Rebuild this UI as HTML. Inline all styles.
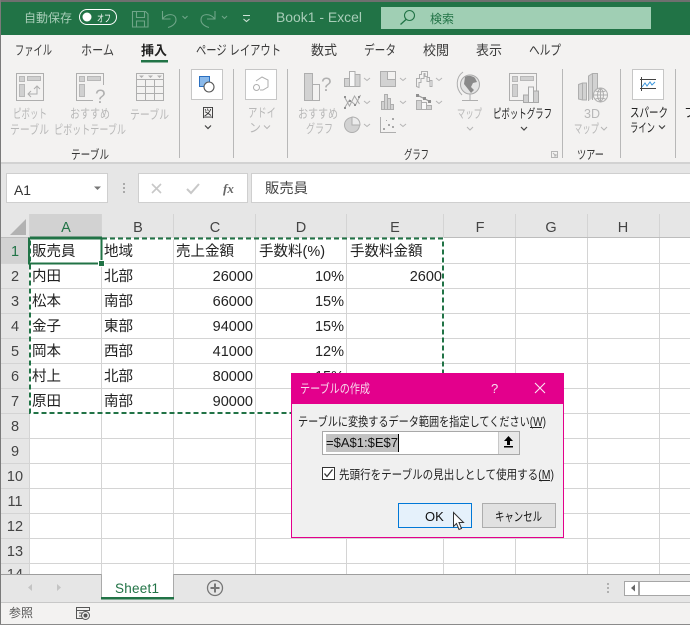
<!DOCTYPE html>
<html lang="ja"><head><meta charset="utf-8"><title>Excel</title>
<style>
html,body{margin:0;padding:0;width:690px;height:625px;overflow:hidden;background:#f3f2f1}
svg{display:block;position:absolute;left:0;top:0}
text{font-family:"Liberation Sans","Noto Sans CJK JP",sans-serif;font-size:13px}
.r{fill:#b8b8b8;font-size:12.5px}
.d{fill:#333;font-size:12.5px}
.t{fill:#3a3a3a;font-size:13.5px}
.c{fill:#222;font-size:14.5px}
.h{fill:#444;font-size:14.5px;text-anchor:middle}
.dl{fill:#222;font-size:12.5px}
.ic{fill:none;stroke:#aeaeae;stroke-width:1}
.if{fill:#d2d2d2;stroke:#aeaeae;stroke-width:1}
.iw{fill:#f8f8f8;stroke:#aeaeae;stroke-width:1}
.ch{fill:none;stroke:#b5b5b5;stroke-width:1}
.chd{fill:none;stroke:#444;stroke-width:1.2}
</style></head><body>
<svg width="690" height="625" viewBox="0 0 690 625" xmlns="http://www.w3.org/2000/svg">
<rect width="690" height="625" fill="#f3f2f1"/>
<!-- title bar -->
<rect x="0" y="2" width="690" height="33" fill="#217346"/>
<text x="24" y="22" fill="#a8cdb8" textLength="48" lengthAdjust="spacingAndGlyphs" style="font-size:12px">自動保存</text>
<rect x="79.500" y="9.500" width="37" height="15" rx="7.500" fill="#217346" stroke="#fff" stroke-width="1"/>
<circle cx="87" cy="17" r="4.500" fill="#fff"/>
<text x="97" y="22" fill="#fff" textLength="14" lengthAdjust="spacingAndGlyphs" style="font-size:10px">オフ</text>
<g fill="none" stroke="#6fa588" stroke-width="1.100">
<path d="M132.500 11.500h13l2.500 2.500v13h-15.500z"/><path d="M136.500 11.500v6h8v-6M136.500 27v-6h8v6"/>
<path d="M162.500 11v8h8M162.500 19C167 13 176 13 176 20C176 24 171 27 168 27.500"/>
<path d="M215 11v8h-8M215 19C210 13 201 13 201 20C201 24 206 27 209 27.500"/>
<path d="M182.500 16l2.500 2.500 2.500-2.500M222 16l2.500 2.500 2.500-2.500"/>
</g>
<path d="M243.500 19l3 2.500 3-2.500M243 15.500h7" fill="none" stroke="#cfe3d7" stroke-width="1.100"/>
<text x="276" y="22" fill="#a8cdb8" textLength="86" lengthAdjust="spacingAndGlyphs" style="font-size:13.500px">Book1  -  Excel</text>
<rect x="381" y="7" width="270" height="22" fill="#a0cfb4"/>
<circle cx="409.500" cy="15.500" r="5" fill="none" stroke="#217346" stroke-width="1.100"/>
<path d="M406 19.500l-5.500 5" stroke="#217346" stroke-width="1.300" fill="none"/>
<text x="430" y="23" fill="#217346" textLength="24" lengthAdjust="spacingAndGlyphs" style="font-size:12px">検索</text>

<!-- tabs -->
<text class="t" x="15" y="55" textLength="37" lengthAdjust="spacingAndGlyphs">ファイル</text>
<text class="t" x="81" y="55" textLength="33" lengthAdjust="spacingAndGlyphs">ホーム</text>
<text class="t" x="141" y="55" textLength="26" lengthAdjust="spacingAndGlyphs" style="font-weight:700;font-size:13px;fill:#222">挿入</text>
<rect x="141" y="60" width="27" height="2.500" fill="#217346"/>
<text class="t" x="196" y="55" textLength="85" lengthAdjust="spacingAndGlyphs">ページ レイアウト</text>
<text class="t" x="311" y="55" textLength="26" lengthAdjust="spacingAndGlyphs">数式</text>
<text class="t" x="364" y="55" textLength="32" lengthAdjust="spacingAndGlyphs">データ</text>
<text class="t" x="423" y="55" textLength="26" lengthAdjust="spacingAndGlyphs">校閲</text>
<text class="t" x="476" y="55" textLength="26" lengthAdjust="spacingAndGlyphs">表示</text>
<text class="t" x="529" y="55" textLength="32" lengthAdjust="spacingAndGlyphs">ヘルプ</text>

<g stroke="#b8b8b8" stroke-width="1"><path d="M179.500 69v89M233.500 69v89M287.500 69v89M562.500 69v89M620.500 69v89M675.500 69v89"/></g>

<!-- pivot table icon -->
<rect class="ic" x="16.500" y="73.500" width="27" height="27"/>
<path d="M19.500 76.500h5v5h-5zM27.500 76.500h13v4h-13zM19.500 84.500h5v12h-5z" fill="#d0d0d0" stroke="#b8b8b8"/>
<path class="ic" d="M31 91l-3 3 3 3M28 94h9v-7M34 89l3-3 3 3"/>
<!-- recommended pivot -->
<rect class="ic" x="76.500" y="73.500" width="27" height="27"/>
<path d="M79.500 76.500h5v5h-5zM87.500 76.500h13v4h-13zM79.500 84.500h5v12h-5z" fill="#d0d0d0" stroke="#b8b8b8"/>
<rect x="93" y="85" width="14" height="19" fill="#f3f2f1"/>
<text x="95" y="103" fill="#b0b0b0" style="font-size:19px">?</text>
<!-- table -->
<rect class="ic" x="136.500" y="73.500" width="27" height="27"/>
<path class="ic" d="M137 79.500h26M137 86.500h26M137 93.500h26M145.500 80v20M154.500 80v20"/>
<path d="M139 75.500h5l-2.500 2.500zM148 75.500h5l-2.500 2.500zM157 75.500h5l-2.500 2.500z" fill="#b0b0b0"/>

<text class="r" x="13" y="118" textLength="34" lengthAdjust="spacingAndGlyphs">ピボット</text>
<text class="r" x="10" y="134" textLength="39" lengthAdjust="spacingAndGlyphs">テーブル</text>
<text class="r" x="70" y="118" textLength="40" lengthAdjust="spacingAndGlyphs">おすすめ</text>
<text class="r" x="54" y="134" textLength="72" lengthAdjust="spacingAndGlyphs">ピボットテーブル</text>
<text class="r" x="130" y="119" textLength="39" lengthAdjust="spacingAndGlyphs">テーブル</text>
<text class="d" x="71" y="159" textLength="38" lengthAdjust="spacingAndGlyphs">テーブル</text>

<!-- shapes -->
<rect x="191.500" y="69.500" width="31" height="30" fill="#fff" stroke="#c6c6c6"/>
<rect x="199.500" y="76.500" width="10" height="10" fill="#8ab9ea" stroke="#2a6fc0"/>
<circle cx="209" cy="87" r="5" fill="#fff" stroke="#555" stroke-width="1.100"/>
<text class="d" x="202" y="117" textLength="12" lengthAdjust="spacingAndGlyphs">図</text>
<path class="chd" d="M205 125.500l3 3 3-3"/>
<!-- addin -->
<rect x="245.500" y="69.500" width="31" height="30" fill="#fff" stroke="#c6c6c6"/>
<circle cx="256.500" cy="87.500" r="3" class="ic"/>
<path class="ic" d="M256 81l6-4 6 3v7l-5 3h-3"/>
<text class="r" x="248" y="117" textLength="28" lengthAdjust="spacingAndGlyphs">アドイ</text>
<text class="r" x="249" y="132" textLength="12" lengthAdjust="spacingAndGlyphs">ン</text>
<path class="ch" d="M264 125.500l3 3 3-3"/>

<!-- rec chart -->
<rect class="if" x="304.500" y="73.500" width="8" height="27"/>
<rect class="ic" x="312.500" y="84.500" width="7" height="16"/>
<text x="321" y="91" fill="#b0b0b0" style="font-size:19px">?</text>
<text class="r" x="298" y="118" textLength="40" lengthAdjust="spacingAndGlyphs">おすすめ</text>
<text class="r" x="306" y="133" textLength="27" lengthAdjust="spacingAndGlyphs">グラフ</text>

<!-- small chart icons -->
<rect class="if" x="344.500" y="78.500" width="5" height="8"/><rect class="iw" x="349.500" y="71.500" width="5.500" height="15"/><rect class="if" x="355" y="74.500" width="5" height="12"/>
<rect class="if" x="380.500" y="71.500" width="15" height="15"/><rect x="387.500" y="71.500" width="8" height="8" fill="#f3f2f1" stroke="#aeaeae"/>
<path class="ic" d="M416.500 86.500v-8h3v-4h2v-3h6v6h2v3h2.500v6h-2v-5h-3v-5h-2v-3h-1v5h-3v4h-2v5z"/>
<path d="M344.500 108l5-8 6 5 5-10M344.500 97l5 9 5-10 5 8" fill="none" stroke="#a8a8a8"/>
<path d="M344 107h2v2h-2zM349 100h2v2h-2zM354 104h2v2h-2zM344 96h2v2h-2zM358 96h2v2h-2z" fill="#909090"/>
<rect class="if" x="381.500" y="101.500" width="3" height="8"/><rect class="if" x="384.500" y="94.500" width="3" height="15"/><rect class="if" x="387.500" y="98.500" width="3" height="11"/><rect class="if" x="390.500" y="104.500" width="3" height="5"/>
<rect class="if" x="416.500" y="100.500" width="5" height="9"/><rect class="iw" x="421.500" y="102.500" width="5" height="7"/><rect class="if" x="426.500" y="105.500" width="5" height="4"/>
<path d="M417 95l14 7" stroke="#999" stroke-width="1.200" fill="none"/><path d="M416 94h3v3h-3zM423 97h3v3h-3zM428 100h3v3h-3z" fill="#909090"/>
<circle cx="352" cy="125" r="7.500" fill="#d2d2d2" stroke="#aeaeae"/><path d="M352 117v8h8C360 120 357 117 352 117z" fill="#ececec" stroke="#aeaeae"/>
<path class="ic" d="M380.500 117v15.500h15.500"/><path d="M383 128h2v2h-2zM388 124h2v2h-2zM392 118h2v2h-2zM386 120h1v1h-1zM392 126h2v2h-2z" fill="#a8a8a8"/>
<path class="ch" d="M364 78l3 2.500 3-2.500M364 101l3 2.500 3-2.500M364 124l3 2.500 3-2.500M400 78l3 2.500 3-2.500M400 101l3 2.500 3-2.500M400 124l3 2.500 3-2.500M436 78l3 2.500 3-2.500M436 101l3 2.500 3-2.500"/>

<!-- map -->
<circle cx="470" cy="84.500" r="9.500" fill="#e4e4e4" stroke="#a8a8a8"/>
<path d="M465 77c3-2 8-1 10 1l2 4-4 1-2 4 3 3-3 3-3-4-4-5z" fill="#8a8a8a"/>
<path class="ic" d="M463 72c-7 5-8 16-1 23M462 100.500h16M470 94v6"/>
<text class="r" x="457" y="118" textLength="25" lengthAdjust="spacingAndGlyphs">マップ</text>
<path class="ch" d="M467 127l3 3 3-3"/>
<!-- pivot chart -->
<rect class="ic" x="509.500" y="73.500" width="27" height="27"/>
<path d="M512.500 76.500h5v5h-5zM520.500 76.500h13v4h-13zM512.500 84.500h5v12h-5z" fill="#d0d0d0" stroke="#b8b8b8"/>
<rect x="523.500" y="95" width="5" height="7.500" fill="#d0d0d0" stroke="#a8a8a8"/>
<rect x="528.500" y="87" width="5" height="15.500" fill="#f4f4f4" stroke="#a8a8a8"/>
<rect x="533.500" y="91" width="5" height="11.500" fill="#d0d0d0" stroke="#a8a8a8"/>
<text class="d" x="493" y="118" textLength="59" lengthAdjust="spacingAndGlyphs" style="fill:#222">ピボットグラフ</text>
<path class="chd" d="M521 127l3 3 3-3"/>
<text class="d" x="404" y="159" textLength="25" lengthAdjust="spacingAndGlyphs">グラフ</text>
<path d="M551.500 151.500h6v6h-6zM553 153l3 3M556 154v2h-2" fill="none" stroke="#b5b5b5"/>
<!-- 3D -->
<path class="if" d="M578.500 84.500l4-1.500h4v17h-4l-4-1z"/><path class="ic" d="M582.500 83v17"/>
<path class="if" d="M588.500 101v-25l4-2.500h5v21"/><path class="ic" d="M592.500 74v26"/>
<circle cx="600.500" cy="95" r="7" fill="#f3f2f1" stroke="#aeaeae"/><path class="ic" d="M593.500 95h14M600.500 88v14M595.500 91c3 1 7 1 10 0M595.500 99c3-1 7-1 10 0M600.500 88c-4 4-4 10 0 14M600.500 88c4 4 4 10 0 14"/>
<text class="r" x="584" y="118" textLength="16" lengthAdjust="spacingAndGlyphs">3D</text>
<text class="r" x="574" y="133" textLength="25" lengthAdjust="spacingAndGlyphs">マップ</text>
<path class="ch" d="M601 127l3 3 3-3"/>
<text class="d" x="577" y="159" textLength="27" lengthAdjust="spacingAndGlyphs">ツアー</text>
<!-- sparkline -->
<rect x="632.500" y="69.500" width="31" height="30" fill="#fff" stroke="#c6c6c6"/>
<path d="M641.500 77v14M640 79.500h16M640 88.500h16" fill="none" stroke="#444"/>
<path d="M642 87l3-4 2 3 3-4 2 3 3-3" fill="none" stroke="#3a96dd" stroke-width="1"/>
<text class="d" x="630" y="117" textLength="38" lengthAdjust="spacingAndGlyphs" style="fill:#222">スパーク</text>
<text class="d" x="630" y="132" textLength="25" lengthAdjust="spacingAndGlyphs" style="fill:#222">ライン</text>
<path class="chd" d="M659 125.500l3 3 3-3"/>
<text class="d" x="684" y="117" style="fill:#222">フ</text>

<!-- formula bar -->
<rect x="0" y="162" width="690" height="2" fill="#d2d2d2"/>
<rect x="0" y="164" width="690" height="50" fill="#e6e6e6"/>
<rect x="6.500" y="173.500" width="101" height="29" fill="#fff" stroke="#cfcfcf"/>
<text x="14" y="195" fill="#333" style="font-size:13.500px" textLength="17" lengthAdjust="spacingAndGlyphs">A1</text>
<path d="M94 186.500h7l-3.500 3.500z" fill="#777"/>
<path d="M123 183h2v2h-2zM123 187h2v2h-2zM123 191h2v2h-2z" fill="#aaa"/>
<rect x="138.500" y="173.500" width="109" height="29" fill="#fff" stroke="#cfcfcf"/>
<path d="M152 184l9 9M161 184l-9 9" stroke="#c8c8c8" stroke-width="1.600" fill="none"/>
<path d="M187 189l4 4 8-9" stroke="#c8c8c8" stroke-width="2" fill="none"/>
<text x="223" y="193" fill="#666" style="font-family:'Liberation Serif',serif;font-style:italic;font-weight:700;font-size:13px">fx</text>
<rect x="251.500" y="173.500" width="439" height="29" fill="#fff" stroke="#cfcfcf"/>
<text x="265" y="193" fill="#444" textLength="43" lengthAdjust="spacingAndGlyphs" style="font-size:14px">販売員</text>

<!-- sheet -->
<rect x="0" y="214" width="690" height="360" fill="#fff"/>
<rect x="1" y="214" width="689" height="24" fill="#e6e6e6"/>
<rect x="1" y="238" width="28" height="336" fill="#e6e6e6"/>
<rect x="30" y="214" width="72" height="24" fill="#d2d2d2"/>
<rect x="1" y="238" width="28" height="25" fill="#d2d2d2"/>
<path d="M26 219v16h-16z" fill="#b2b2b2"/>
<g stroke="#d4d4d4" fill="none">
<path d="M29.500 214v360M101.500 214v360M173.500 214v360M255.500 214v360M346.500 214v360M443.500 214v360M515.500 214v360M587.500 214v360M659.500 214v360"/>
<path d="M1 263.500h689M1 288.500h689M1 313.500h689M1 338.500h689M1 363.500h689M1 388.500h689M1 413.500h689M1 438.500h689M1 463.500h689M1 488.500h689M1 513.500h689M1 538.500h689M1 563.500h689"/>
</g>
<path d="M1 237.500h689" stroke="#bdbdbd"/>
<rect x="30" y="236.500" width="72" height="2" fill="#217346"/>
<rect x="28" y="238" width="2" height="25" fill="#217346"/>
<text class="h" x="66" y="232" style="fill:#217346">A</text>
<text class="h" x="138" y="232">B</text><text class="h" x="215" y="232">C</text><text class="h" x="301" y="232">D</text><text class="h" x="395" y="232">E</text><text class="h" x="480" y="232">F</text><text class="h" x="551" y="232">G</text><text class="h" x="623" y="232">H</text>
<text class="h" x="15" y="256" style="fill:#217346">1</text><text class="h" x="15" y="281">2</text><text class="h" x="15" y="306">3</text><text class="h" x="15" y="331">4</text><text class="h" x="15" y="356">5</text><text class="h" x="15" y="381">6</text><text class="h" x="15" y="406">7</text><text class="h" x="15" y="431">8</text><text class="h" x="15" y="456">9</text><text class="h" x="15" y="481">10</text><text class="h" x="15" y="506">11</text><text class="h" x="15" y="531">12</text><text class="h" x="15" y="556">13</text><text class="h" x="15" y="579">14</text>
<g>
<text class="c" x="32" y="256">販売員</text><text class="c" x="104" y="256">地域</text><text class="c" x="176" y="256">売上金額</text><text class="c" x="259" y="256">手数料(%)</text><text class="c" x="350" y="256">手数料金額</text>
<text class="c" x="32" y="281">内田</text><text class="c" x="104" y="281">北部</text>
<text class="c" x="32" y="306">松本</text><text class="c" x="104" y="306">南部</text>
<text class="c" x="32" y="331">金子</text><text class="c" x="104" y="331">東部</text>
<text class="c" x="32" y="356">岡本</text><text class="c" x="104" y="356">西部</text>
<text class="c" x="32" y="381">村上</text><text class="c" x="104" y="381">北部</text>
<text class="c" x="32" y="406">原田</text><text class="c" x="104" y="406">南部</text>
</g>
<g text-anchor="end">
<text class="c" x="253" y="281">26000</text><text class="c" x="253" y="306">66000</text><text class="c" x="253" y="331">94000</text><text class="c" x="253" y="356">41000</text><text class="c" x="253" y="381">80000</text><text class="c" x="253" y="406">90000</text>
<text class="c" x="344" y="281">10%</text><text class="c" x="344" y="306">15%</text><text class="c" x="344" y="331">15%</text><text class="c" x="344" y="356">12%</text><text class="c" x="344" y="381">15%</text>
<text class="c" x="442" y="281">2600</text>
</g>
<rect x="30" y="238.500" width="413" height="174.500" fill="none" stroke="#fff" stroke-width="2"/>
<rect x="30" y="238.500" width="413" height="174.500" fill="none" stroke="#217346" stroke-width="2" stroke-dasharray="5 3"/>
<rect x="29" y="238.500" width="72.500" height="25" fill="none" stroke="#217346" stroke-width="2"/>
<rect x="98.500" y="260.500" width="6" height="6" fill="#217346" stroke="#fff" stroke-width="1"/>

<!-- bottom -->
<rect x="0" y="574" width="690" height="28" fill="#e6e6e6"/>
<path d="M0 574.500h690" stroke="#9e9e9e"/>
<rect x="101" y="574" width="73" height="25" fill="#fff"/>
<path d="M101.500 574v24M173.500 574v24" stroke="#aaa"/>
<rect x="101" y="597" width="73" height="2.500" fill="#217346"/>
<text x="115" y="593" fill="#217346" textLength="44" lengthAdjust="spacing" style="font-size:13.500px">Sheet1</text>
<path d="M32 584v7l-4-3.500zM57 584v7l4-3.500z" fill="#c4c4c4"/>
<circle cx="215" cy="588" r="7.500" fill="none" stroke="#777" stroke-width="1.300"/>
<path d="M210.500 588h9M215 583.500v9" stroke="#777" stroke-width="2"/>
<path d="M607 583h2v2h-2zM607 587h2v2h-2zM607 591h2v2h-2z" fill="#b0b0b0"/>
<rect x="624.500" y="581.500" width="14" height="14" fill="#fff" stroke="#a6a6a6"/>
<path d="M635 584.500v7l-4-3.500z" fill="#666"/>
<rect x="640" y="581" width="50" height="15" fill="#fff"/>
<path d="M640 581.500h50M640 595.500h50" stroke="#a6a6a6"/>
<rect x="639" y="581" width="1" height="15" fill="#a6a6a6"/>
<rect x="0" y="602" width="690" height="22" fill="#f3f2f1"/>
<path d="M0 602.500h690" stroke="#c8c8c8"/>
<text x="9" y="617" fill="#555" textLength="24" lengthAdjust="spacingAndGlyphs" style="font-size:12px">参照</text>
<path d="M76.500 607.500h13v3h-13zM76.500 610.500v8h6M79 613h5M79 616h3" fill="none" stroke="#555"/>
<circle cx="85.500" cy="615.500" r="4" fill="#f3f2f1" stroke="#555"/><circle cx="85.500" cy="615.500" r="2" fill="#555"/>

<rect x="0" y="0" width="690" height="2" fill="#6f6f6f"/>
<rect x="0" y="0" width="1" height="625" fill="#7a7a7a"/>
<rect x="0" y="624" width="690" height="1" fill="#8a8a8a"/>

<!-- dialog -->
<rect x="291.500" y="373.500" width="272" height="164" fill="#f0f0f0" stroke="#e3008c"/>
<rect x="291" y="373" width="273" height="31" fill="#e3008c"/>
<text x="300" y="393" fill="#f8dcee" textLength="70" lengthAdjust="spacingAndGlyphs" style="font-size:12.500px">テーブルの作成</text>
<text x="491" y="393" fill="#f8dcee" style="font-size:13px">?</text>
<path d="M535 383l10 10M545 383l-10 10" stroke="#fbe6f3" stroke-width="1.100" fill="none"/>
<text class="dl" x="298" y="426" textLength="248" lengthAdjust="spacingAndGlyphs">テーブルに変換するデータ範囲を指定してください(W)</text>
<path d="M530 427.500h12" stroke="#222"/>
<rect x="322.500" y="431.500" width="197" height="23" fill="#fff" stroke="#a8a8a8"/>
<rect x="326" y="434" width="72" height="18" fill="#c2c2c2"/>
<text x="326" y="447" fill="#111" textLength="72" lengthAdjust="spacingAndGlyphs" style="font-size:13px">=$A$1:$E$7</text>
<path d="M398.500 434v18" stroke="#000"/>
<rect x="498" y="432" width="21" height="22" fill="#e8e8e8"/>
<path d="M498.500 432v22" stroke="#c8c8c8"/>
<path d="M508.500 436l4.500 5h-3v4h-3v-4h-3z" fill="#000"/><rect x="504" y="446" width="9" height="1.500" fill="#000"/>
<rect x="322.500" y="467.500" width="12" height="12" fill="#fff" stroke="#333"/>
<path d="M324.500 473.500l2.500 3 5.500-7" fill="none" stroke="#333" stroke-width="1.300"/>
<text class="dl" x="339" y="479" textLength="215" lengthAdjust="spacingAndGlyphs">先頭行をテーブルの見出しとして使用する(M)</text>
<path d="M539 480.500h11" stroke="#222"/>
<rect x="398.500" y="503.500" width="73" height="24" fill="#e5f1fb" stroke="#0078d7"/>
<text x="425" y="521" fill="#111" style="font-size:13px">OK</text>
<rect x="482.500" y="503.500" width="73" height="24" fill="#e1e1e1" stroke="#adadad"/>
<text x="495" y="521" fill="#111" textLength="47" lengthAdjust="spacingAndGlyphs" style="font-size:12.500px">キャンセル</text>
<path d="M453.500 512.500v14l3-3 2.500 6 2.500-1-2.500-6h4.500z" fill="#fff" stroke="#333"/>
</svg>
</body></html>
